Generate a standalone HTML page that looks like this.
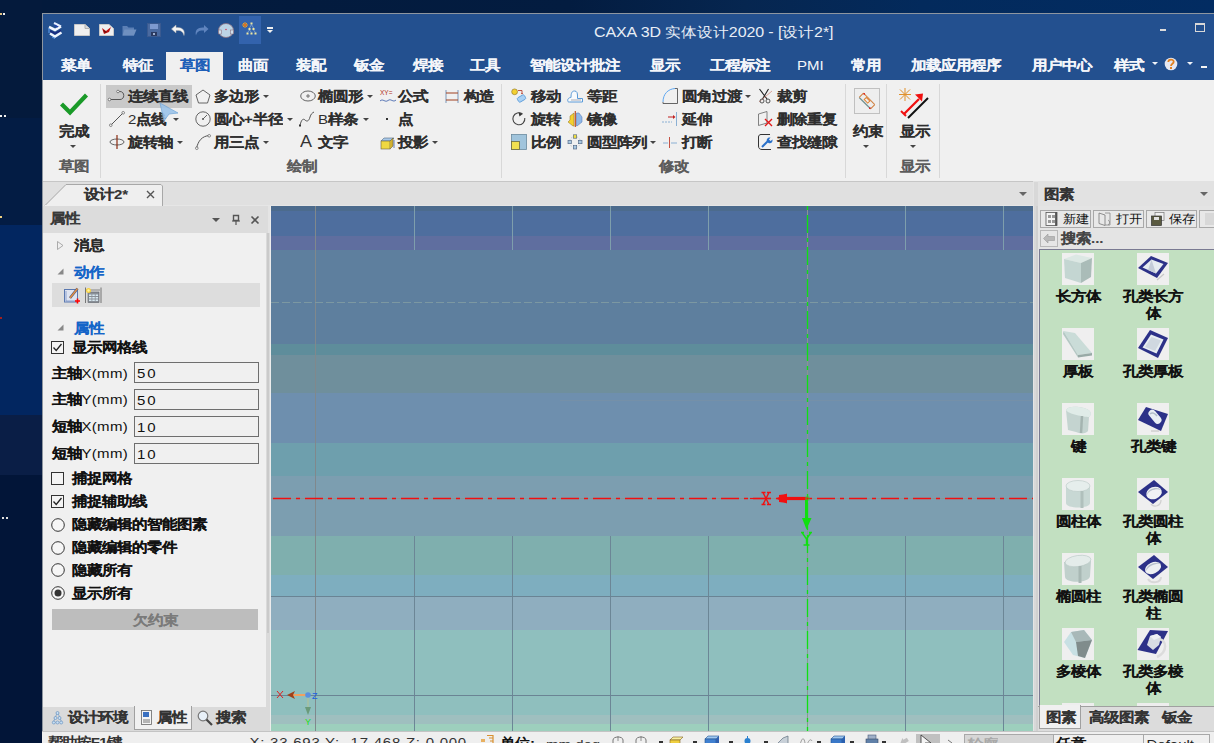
<!DOCTYPE html>
<html><head><meta charset="utf-8">
<style>
*{box-sizing:border-box}
html,body{margin:0;padding:0;width:1214px;height:743px;overflow:hidden;background:#021634;font-family:"Liberation Sans",sans-serif}
.a{position:absolute}
.t{position:absolute;white-space:nowrap;line-height:1;transform:scaleY(0.9);transform-origin:50% 55%}
.k{-webkit-text-stroke:0.12px currentColor}
svg{overflow:visible}
</style></head><body>

<div class="a" style="left:0px;top:0px;width:1214px;height:743px;background:#021636;"></div>
<div class="a" style="left:0px;top:0px;width:42px;height:118px;background:#041a3c;"></div>
<div class="a" style="left:42px;top:0px;width:1172px;height:13px;background:linear-gradient(90deg,#031a3c 0%,#031c40 45%,#062650 60%,#032a5c 75%,#022c62 100%);"></div>
<div class="a" style="left:0px;top:118px;width:42px;height:107px;background:#031c44;"></div>
<div class="a" style="left:0px;top:225px;width:42px;height:190px;background:#022660;"></div>
<div class="a" style="left:0px;top:415px;width:42px;height:60px;background:#0a1e46;"></div>
<div class="a" style="left:0px;top:475px;width:42px;height:268px;background:#021538;"></div>
<div class="a" style="left:0px;top:13px;width:2px;height:2px;background:#e0c080;"></div>
<div class="a" style="left:3px;top:13px;width:2px;height:2px;background:#f0f0f0;"></div>
<div class="a" style="left:0px;top:115px;width:2px;height:2px;background:#f0f0f0;"></div>
<div class="a" style="left:4px;top:115px;width:2px;height:2px;background:#f0f0f0;"></div>
<div class="a" style="left:0px;top:216px;width:2px;height:2px;background:#f0d080;"></div>
<div class="a" style="left:0px;top:317px;width:2px;height:2px;background:#a02020;"></div>
<div class="a" style="left:2px;top:517px;width:2px;height:2px;background:#e0e0e0;"></div>
<div class="a" style="left:6px;top:517px;width:2px;height:2px;background:#e0e0e0;"></div>
<div class="a" style="left:42px;top:13px;width:1172px;height:730px;background:#8e96a0;"></div>
<div class="a" style="left:43px;top:14px;width:1171px;height:66px;background:#23508f;"></div>
<svg class="a" style="left:45px;top:19px;" width="20" height="22" viewBox="0 0 20 22"><path d="M4 8 L10 11 L16 7.5" fill="none" stroke="#f4f8ff" stroke-width="2.6"/><path d="M9 4 L16 7.5" fill="none" stroke="#e8f0ff" stroke-width="2"/><path d="M9.5 6 L13 8" stroke="#2040b0" stroke-width="1.2"/><path d="M5 12 L10 14.5 L16 11.5" fill="none" stroke="#1a2a80" stroke-width="1.4"/><path d="M5 14.5 L10 17.5 L16.5 13.5" fill="none" stroke="#f0f6ff" stroke-width="2.4"/><path d="M4 9 V14 M7 18 L10 19.5" stroke="#60a0f0" stroke-width="1"/></svg>
<svg class="a" style="left:74px;top:24px;" width="16" height="12" viewBox="0 0 16 12"><path d="M0.5 0.5 H11 L15.5 4.5 V11.5 H0.5Z" fill="#efefef" stroke="#c8c8c8"/><path d="M11 0.5 V4.5 H15.5" fill="#d8d8d8" stroke="#b0b0b0"/></svg>
<svg class="a" style="left:99px;top:24px;" width="15" height="12" viewBox="0 0 15 12"><path d="M0.5 0.5 H10 L14.5 4.5 V11.5 H0.5Z" fill="#efefef" stroke="#c8c8c8"/><path d="M3 4 L7 7 L12 3 L10 8 L5 10Z" fill="#c01010"/><path d="M4 6 L8 8 L6 9Z" fill="#601010"/></svg>
<svg class="a" style="left:122px;top:25px;" width="15" height="11" viewBox="0 0 15 11"><path d="M0.5 1 H5 L6.5 2.5 H12 V10.5 H0.5Z" fill="#5b7fb5"/><path d="M2.5 4.5 H14.5 L12 10.5 H0.5Z" fill="#6f90c0"/></svg>
<svg class="a" style="left:147px;top:23px;" width="14" height="14" viewBox="0 0 14 14"><rect x="0.5" y="0.5" width="13" height="13" fill="#4a6aa0" stroke="#3a5a90"/><rect x="3" y="1" width="8" height="5" fill="#7d9ad0"/><rect x="4" y="9" width="6" height="4" fill="#2a3a60"/><rect x="6" y="10" width="2" height="2" fill="#a0b0d0"/></svg>
<svg class="a" style="left:171px;top:24px;" width="15" height="13" viewBox="0 0 15 13"><path d="M5 1 L0.5 5 L5 9 V6.5 C9 6 12 7 13 11.5 C14.5 6 11 3 5 3.5Z" fill="#f4f4f4" stroke="#b0b0b0" stroke-width="0.5"/></svg>
<svg class="a" style="left:194px;top:24px;" width="15" height="13" viewBox="0 0 15 13"><path d="M10 1 L14.5 5 L10 9 V6.5 C6 6 3 7 2 11.5 C0.5 6 4 3 10 3.5Z" fill="#5f84be"/></svg>
<svg class="a" style="left:218px;top:22px;" width="16" height="16" viewBox="0 0 16 16"><ellipse cx="8" cy="8.5" rx="7.5" ry="7" fill="#bcd4e6" stroke="#8a7080" stroke-width="0.8"/><rect x="0.5" y="8" width="3" height="4" fill="#d0e0ec" stroke="#806070" stroke-width="0.5"/><rect x="12.5" y="8" width="3" height="4" fill="#d0e0ec" stroke="#806070" stroke-width="0.5"/><circle cx="8" cy="7.5" r="0.8" fill="#d04060"/></svg>
<div class="a" style="left:239px;top:16px;width:22px;height:28px;background:#3363ad;"></div>
<svg class="a" style="left:242px;top:22px;" width="16" height="14" viewBox="0 0 16 14"><g stroke="#f0a020" stroke-width="1"><path d="M1 1 L5 5 M5 1 L1 5 M3 0 V6 M0 3 H6"/></g><circle cx="3" cy="3" r="1.3" fill="#f07010"/><g fill="#f0e8a0"><rect x="8.5" y="0.5" width="2" height="2"/><rect x="6.5" y="6" width="2" height="2"/><rect x="10.5" y="6" width="2" height="2"/><rect x="4.5" y="10.5" width="2" height="2"/><rect x="8.5" y="10.5" width="2" height="2"/><rect x="12.5" y="10.5" width="2" height="2"/></g><path d="M9.5 2.5 L7.5 6 M9.5 2.5 L11.5 6 M7.5 8 L5.5 10.5 M7.5 8 L9.5 10.5 M11.5 8 L13.5 10.5" stroke="#a0c0e0" stroke-width="0.6"/></svg>
<div class="a" style="left:267px;top:27px;width:6px;height:1.5px;background:#f0f0f0;"></div>
<div class="a" style="left:267px;top:30px;width:0;height:0;border-left:3px solid transparent;border-right:3px solid transparent;border-top:3px solid #f0f0f0"></div>
<div class="t" style="left:594px;top:24.2px;font-size:16px;color:#e8eef6;font-weight:normal;letter-spacing:-0.1px">CAXA 3D 实体设计2020 - [设计2*]</div>
<div class="a" style="left:1160px;top:29px;width:6px;height:2px;background:#dcdcdc;"></div>
<div class="a" style="left:1195px;top:23px;width:10px;height:9px;border:1px solid #d8d8d8;border-top-width:2px"></div>
<div class="a" style="left:166px;top:52px;width:57px;height:28px;background:#f0f0f0;"></div>
<div class="t k" style="left:61.0px;top:56.7px;font-size:15px;color:#f4f6fa;font-weight:bold;">菜单</div>
<div class="t k" style="left:122.5px;top:56.7px;font-size:15px;color:#f4f6fa;font-weight:bold;">特征</div>
<div class="t k" style="left:180.0px;top:56.7px;font-size:15px;color:#1f5fb8;font-weight:bold;">草图</div>
<div class="t k" style="left:238.0px;top:56.7px;font-size:15px;color:#f4f6fa;font-weight:bold;">曲面</div>
<div class="t k" style="left:296.0px;top:56.7px;font-size:15px;color:#f4f6fa;font-weight:bold;">装配</div>
<div class="t k" style="left:353.5px;top:56.7px;font-size:15px;color:#f4f6fa;font-weight:bold;">钣金</div>
<div class="t k" style="left:412.5px;top:56.7px;font-size:15px;color:#f4f6fa;font-weight:bold;">焊接</div>
<div class="t k" style="left:469.5px;top:56.7px;font-size:15px;color:#f4f6fa;font-weight:bold;">工具</div>
<div class="t k" style="left:529.5px;top:56.7px;font-size:15px;color:#f4f6fa;font-weight:bold;">智能设计批注</div>
<div class="t k" style="left:649.5px;top:56.7px;font-size:15px;color:#f4f6fa;font-weight:bold;">显示</div>
<div class="t k" style="left:709.5px;top:56.7px;font-size:15px;color:#f4f6fa;font-weight:bold;">工程标注</div>
<div class="t k" style="left:850.5px;top:56.7px;font-size:15px;color:#f4f6fa;font-weight:bold;">常用</div>
<div class="t k" style="left:910.5px;top:56.7px;font-size:15px;color:#f4f6fa;font-weight:bold;">加载应用程序</div>
<div class="t k" style="left:1031.5px;top:56.7px;font-size:15px;color:#f4f6fa;font-weight:bold;">用户中心</div>
<div class="t k" style="left:1113.5px;top:56.7px;font-size:15px;color:#f4f6fa;font-weight:bold;">样式</div>
<div class="t" style="left:797px;top:56.7px;font-size:15px;color:#f4f6fa;font-weight:normal;">PMI</div>
<div class="a" style="left:1151.5px;top:62px;width:0;height:0;border-left:3px solid transparent;border-right:3px solid transparent;border-top:3px solid #f0f4fa"></div>
<svg class="a" style="left:1164px;top:57px;" width="14" height="14" viewBox="0 0 14 14"><circle cx="7" cy="7" r="6.3" fill="#e6e8f0"/><path d="M4.3 5 C4.3 1.8 9.7 1.8 9.7 4.8 C9.7 6.8 7 6.8 7 9" fill="none" stroke="#e08020" stroke-width="1.8"/><rect x="6" y="10" width="2" height="2" fill="#e08020"/></svg>
<div class="a" style="left:1186.5px;top:62px;width:0;height:0;border-left:3px solid transparent;border-right:3px solid transparent;border-top:3px solid #f0f4fa"></div>
<div class="a" style="left:1201px;top:66px;width:6px;height:2px;background:#f4f4f4;"></div>
<div class="a" style="left:43px;top:80px;width:1171px;height:101px;background:#f0f0f0;"></div>
<div class="a" style="left:43px;top:181px;width:1171px;height:1px;background:#c6c6c6;"></div>
<div class="a" style="left:100px;top:84px;width:1px;height:94px;background:#d8d8d8;"></div>
<div class="a" style="left:501px;top:84px;width:1px;height:94px;background:#d8d8d8;"></div>
<div class="a" style="left:845px;top:84px;width:1px;height:94px;background:#d8d8d8;"></div>
<div class="a" style="left:886px;top:84px;width:1px;height:94px;background:#d8d8d8;"></div>
<div class="a" style="left:939px;top:84px;width:1px;height:94px;background:#d8d8d8;"></div>
<svg class="a" style="left:60px;top:93px;" width="28" height="22" viewBox="0 0 28 22"><path d="M1.5 11 L10 19.5 L26.5 2" fill="none" stroke="#1a9a28" stroke-width="4.2"/></svg>
<div class="t k" style="left:59px;top:122.7px;font-size:15px;color:#2e2e2e;font-weight:bold;">完成</div>
<div class="a" style="left:70px;top:145px;width:0;height:0;border-left:3px solid transparent;border-right:3px solid transparent;border-top:3px solid #444"></div>
<div class="t k" style="left:59px;top:158.2px;font-size:15px;color:#5c5c5c;font-weight:bold;">草图</div>
<div class="a" style="left:106px;top:85px;width:86px;height:23px;background:#c9c9c9;"></div>
<svg class="a" style="left:108px;top:89px;" width="18" height="14" viewBox="0 0 18 14"><path d="M1 10.5 H12 C17 10.5 17 2.5 12 2.5 H10" fill="none" stroke="#555" stroke-width="1"/><circle cx="10" cy="2.5" r="1.3" fill="#fff" stroke="#555" stroke-width="0.7"/><circle cx="1.5" cy="10.5" r="1.3" fill="#fff" stroke="#555" stroke-width="0.7"/></svg>
<div class="t k" style="left:128px;top:87.7px;font-size:15px;color:#2e2e2e;font-weight:bold;">连续直线</div>
<svg class="a" style="left:109px;top:111px;" width="16" height="16" viewBox="0 0 16 16"><path d="M1.5 14.5 L14.5 1.5" stroke="#555" stroke-width="1"/><circle cx="1.8" cy="14.2" r="1.3" fill="#fff" stroke="#555" stroke-width="0.7"/><circle cx="14.2" cy="1.8" r="1.3" fill="#fff" stroke="#555" stroke-width="0.7"/></svg>
<div class="t k" style="left:128px;top:110.7px;font-size:15px;color:#2e2e2e;font-weight:bold;"><span style="font-weight:normal;-webkit-text-stroke:0">2</span>点线</div>
<div class="a" style="left:173px;top:118px;width:0;height:0;border-left:3px solid transparent;border-right:3px solid transparent;border-top:3px solid #444"></div>
<svg class="a" style="left:109px;top:135px;" width="16" height="14" viewBox="0 0 16 14"><ellipse cx="8" cy="7" rx="7" ry="3" fill="none" stroke="#555" stroke-width="0.9"/><path d="M8 0 V14" stroke="#8a2a10" stroke-width="1.2"/></svg>
<div class="t k" style="left:128px;top:133.7px;font-size:15px;color:#2e2e2e;font-weight:bold;">旋转轴</div>
<div class="a" style="left:177px;top:141px;width:0;height:0;border-left:3px solid transparent;border-right:3px solid transparent;border-top:3px solid #444"></div>
<svg class="a" style="left:158px;top:101px;" width="22" height="22" viewBox="0 0 22 22"><path d="M2 2 L20 12 L11 13 L6 20Z" fill="#9cc4ea" stroke="#6fa4d8" stroke-width="0.8" opacity="0.9"/></svg>
<svg class="a" style="left:195px;top:89px;" width="16" height="15" viewBox="0 0 16 15"><path d="M8 1 L15 6 L12.5 14 H3.5 L1 6Z" fill="none" stroke="#555" stroke-width="0.9"/></svg>
<div class="t k" style="left:214px;top:87.7px;font-size:15px;color:#2e2e2e;font-weight:bold;">多边形</div>
<div class="a" style="left:263px;top:95px;width:0;height:0;border-left:3px solid transparent;border-right:3px solid transparent;border-top:3px solid #444"></div>
<svg class="a" style="left:195px;top:111px;" width="16" height="16" viewBox="0 0 16 16"><circle cx="8" cy="8" r="7.2" fill="none" stroke="#555" stroke-width="0.9"/><path d="M8 8 L12 4" stroke="#555" stroke-width="0.9"/><circle cx="8" cy="8" r="1" fill="#555"/></svg>
<div class="t k" style="left:214px;top:110.7px;font-size:15px;color:#2e2e2e;font-weight:bold;">圆心+半径</div>
<div class="a" style="left:287px;top:118px;width:0;height:0;border-left:3px solid transparent;border-right:3px solid transparent;border-top:3px solid #444"></div>
<svg class="a" style="left:195px;top:134px;" width="16" height="16" viewBox="0 0 16 16"><path d="M1.5 14.5 C3 7 7 2 14.5 1.5" fill="none" stroke="#555" stroke-width="1"/><circle cx="1.8" cy="14.2" r="1.3" fill="#fff" stroke="#555" stroke-width="0.7"/><circle cx="14.2" cy="1.8" r="1.3" fill="#fff" stroke="#555" stroke-width="0.7"/></svg>
<div class="t k" style="left:214px;top:133.7px;font-size:15px;color:#2e2e2e;font-weight:bold;">用三点</div>
<div class="a" style="left:263px;top:141px;width:0;height:0;border-left:3px solid transparent;border-right:3px solid transparent;border-top:3px solid #444"></div>
<svg class="a" style="left:300px;top:90px;" width="16" height="12" viewBox="0 0 16 12"><ellipse cx="8" cy="6" rx="7.3" ry="5" fill="none" stroke="#555" stroke-width="0.9"/><path d="M6 6 H10 M8 4 V8" stroke="#555" stroke-width="0.8"/></svg>
<div class="t k" style="left:318px;top:87.7px;font-size:15px;color:#2e2e2e;font-weight:bold;">椭圆形</div>
<div class="a" style="left:367px;top:95px;width:0;height:0;border-left:3px solid transparent;border-right:3px solid transparent;border-top:3px solid #444"></div>
<svg class="a" style="left:299px;top:111px;" width="16" height="16" viewBox="0 0 16 16"><path d="M1 15 C2 9 4 7 6 9 C8 11 10 10 11 6 C12 3 13 2 15 1" fill="none" stroke="#555" stroke-width="1"/><rect x="0" y="13.5" width="2" height="2" fill="#333"/></svg>
<div class="t k" style="left:318px;top:110.7px;font-size:15px;color:#2e2e2e;font-weight:bold;"><span style="font-weight:normal;-webkit-text-stroke:0">B</span>样条</div>
<div class="a" style="left:363px;top:118px;width:0;height:0;border-left:3px solid transparent;border-right:3px solid transparent;border-top:3px solid #444"></div>
<div class="t" style="left:300px;top:132.7px;font-size:18px;color:#333;font-weight:normal;">A</div>
<div class="t k" style="left:318px;top:133.7px;font-size:15px;color:#2e2e2e;font-weight:bold;">文字</div>
<svg class="a" style="left:380px;top:89px;" width="16" height="15" viewBox="0 0 16 15"><text x="0" y="6" font-size="6.5" fill="#b03020" font-family="Liberation Sans">XY=</text><path d="M0 12 C3 9 5 14 8 11.5 C11 9 13 14 16 11" fill="none" stroke="#4a6ab0" stroke-width="0.9"/></svg>
<div class="t k" style="left:398px;top:87.7px;font-size:15px;color:#2e2e2e;font-weight:bold;">公式</div>
<div class="a" style="left:386px;top:118px;width:2px;height:2px;background:#333;"></div>
<div class="t k" style="left:398px;top:110.7px;font-size:15px;color:#2e2e2e;font-weight:bold;">点</div>
<svg class="a" style="left:380px;top:134px;" width="15" height="16" viewBox="0 0 15 16"><path d="M1 7 L4 4 H14 L11 7Z" fill="#a8c8e8" stroke="#506a80" stroke-width="0.6"/><rect x="1" y="7" width="9" height="8" fill="#f0d840" stroke="#6a6040" stroke-width="0.6"/><path d="M10 7 L13 4 V12 L10 15" fill="#d0b030" stroke="#6a6040" stroke-width="0.6"/><path d="M14 6 V14" stroke="#4060a0" stroke-width="0.8"/></svg>
<div class="t k" style="left:398px;top:133.7px;font-size:15px;color:#2e2e2e;font-weight:bold;">投影</div>
<div class="a" style="left:432px;top:141px;width:0;height:0;border-left:3px solid transparent;border-right:3px solid transparent;border-top:3px solid #444"></div>
<svg class="a" style="left:445px;top:89px;" width="14" height="15" viewBox="0 0 14 15"><path d="M1 1 V14 M13 1 V14" stroke="#7a96b8" stroke-width="1"/><path d="M1 4 H13 M1 11 H13" stroke="#a04020" stroke-width="1"/></svg>
<div class="t k" style="left:463.5px;top:87.7px;font-size:15px;color:#2e2e2e;font-weight:bold;">构造</div>
<div class="t k" style="left:287px;top:158.2px;font-size:15px;color:#5c5c5c;font-weight:bold;">绘制</div>
<svg class="a" style="left:511px;top:88px;" width="16" height="16" viewBox="0 0 16 16"><circle cx="3.6" cy="3.8" r="2.9" fill="#f4d030" stroke="#8a7020" stroke-width="0.6"/><path d="M7 2.5 H11 V5.5" fill="none" stroke="#b03020" stroke-width="0.8"/><path d="M10 5 L11 6.5 L12 5Z" fill="#b03020"/><rect x="6.5" y="8" width="8" height="5" rx="1.5" transform="rotate(-30 10.5 10.5)" fill="#a8d0f4" stroke="#5a9ad8" stroke-width="0.8"/></svg>
<div class="t k" style="left:530.5px;top:87.7px;font-size:15px;color:#2e2e2e;font-weight:bold;">移动</div>
<svg class="a" style="left:512px;top:111px;" width="14" height="15" viewBox="0 0 14 15"><path d="M10.5 3 A6 6 0 1 0 12.8 7" fill="none" stroke="#444" stroke-width="1.1"/><path d="M6.5 1.2 L10.5 3 L7.5 5.5Z" fill="#333"/></svg>
<div class="t k" style="left:530.5px;top:110.7px;font-size:15px;color:#2e2e2e;font-weight:bold;">旋转</div>
<svg class="a" style="left:511px;top:134px;" width="16" height="16" viewBox="0 0 16 16"><rect x="0.5" y="0.5" width="15" height="15" fill="#a0c4dc" stroke="#6a8aa0" stroke-width="0.8"/><rect x="0.5" y="7.5" width="8" height="8" fill="#f0e050" stroke="#6a6a40" stroke-width="0.8"/></svg>
<div class="t k" style="left:530.5px;top:133.7px;font-size:15px;color:#2e2e2e;font-weight:bold;">比例</div>
<svg class="a" style="left:567px;top:88px;" width="16" height="16" viewBox="0 0 16 16"><path d="M1 13.5 C0 11 2 9.5 4 9.5 C4 5 5 3 7.5 3 C10 3 10.5 5 10.5 8 V10.5 H15.5 V14 H2.5 C1.5 14 1 14 1 13.5Z" fill="#f8fafc" stroke="#5a9ad8" stroke-width="1"/><path d="M4 12 H14" stroke="#8a8a9a" stroke-width="0.7"/></svg>
<div class="t k" style="left:587px;top:87.7px;font-size:15px;color:#2e2e2e;font-weight:bold;">等距</div>
<svg class="a" style="left:567px;top:111px;" width="16" height="16" viewBox="0 0 16 16"><path d="M7 2 L3 5 V9 L1 11 L6 15 H7Z" fill="#f4d030" stroke="#8a7020" stroke-width="0.5"/><path d="M9.5 2 H12 L15 6 V11 L10 15 H9.5Z" fill="#90b8e8" stroke="#4a70b0" stroke-width="0.5"/><path d="M8.3 0 V16" stroke="#c05020" stroke-width="1.2"/></svg>
<div class="t k" style="left:587px;top:110.7px;font-size:15px;color:#2e2e2e;font-weight:bold;">镜像</div>
<svg class="a" style="left:567px;top:134px;" width="16" height="16" viewBox="0 0 16 16"><circle cx="8" cy="8" r="5.5" fill="none" stroke="#a0a8b8" stroke-width="0.6" stroke-dasharray="1.5 1.5"/><g stroke="#4a6080" stroke-width="0.6"><rect x="6.3" y="0.8" width="3.4" height="3.4" fill="#f4e040"/><rect x="1" y="6.3" width="3.4" height="3.4" fill="#a8c8e0"/><rect x="11.6" y="6.3" width="3.4" height="3.4" fill="#a8c8e0"/><rect x="6.3" y="11.6" width="3.4" height="3.4" fill="#a8c8e0"/></g></svg>
<div class="t k" style="left:587px;top:133.7px;font-size:15px;color:#2e2e2e;font-weight:bold;">圆型阵列</div>
<div class="a" style="left:650px;top:141px;width:0;height:0;border-left:3px solid transparent;border-right:3px solid transparent;border-top:3px solid #444"></div>
<svg class="a" style="left:662px;top:88px;" width="16" height="16" viewBox="0 0 16 16"><path d="M13 0.5 H15.5 V15.5 H1 V14" fill="none" stroke="#555" stroke-width="0.9"/><path d="M1 14 C1 6 6 1 13 0.5" fill="none" stroke="#60a8f0" stroke-width="1"/></svg>
<div class="t k" style="left:682px;top:87.7px;font-size:15px;color:#2e2e2e;font-weight:bold;">圆角过渡</div>
<div class="a" style="left:745px;top:95px;width:0;height:0;border-left:3px solid transparent;border-right:3px solid transparent;border-top:3px solid #444"></div>
<svg class="a" style="left:662px;top:111px;" width="16" height="15" viewBox="0 0 16 15"><path d="M0 11 H10" stroke="#80a8d0" stroke-width="0.9" stroke-dasharray="2 1"/><path d="M6 6 H12" stroke="#c02020" stroke-width="1"/><path d="M11 4 L13.5 6 L11 8" fill="#c02020"/><path d="M14.5 1 V15" stroke="#80a8d0" stroke-width="0.9"/></svg>
<div class="t k" style="left:682px;top:110.7px;font-size:15px;color:#2e2e2e;font-weight:bold;">延伸</div>
<svg class="a" style="left:662px;top:134px;" width="16" height="15" viewBox="0 0 16 15"><path d="M1 9 H6 M9 9 H15" stroke="#80a8d0" stroke-width="0.9"/><path d="M7.5 3 V14" stroke="#c04030" stroke-width="0.9"/></svg>
<div class="t k" style="left:682px;top:133.7px;font-size:15px;color:#2e2e2e;font-weight:bold;">打断</div>
<svg class="a" style="left:758px;top:88px;" width="15" height="16" viewBox="0 0 15 16"><path d="M1.5 1 L9 11 M10.5 1 L4.5 11" stroke="#222" stroke-width="1.1"/><path d="M14 3 L1 14" stroke="#d08070" stroke-width="0.7"/><circle cx="4" cy="13" r="2" fill="none" stroke="#444" stroke-width="0.9"/><circle cx="10" cy="13" r="2" fill="none" stroke="#444" stroke-width="0.9"/></svg>
<div class="t k" style="left:777px;top:87.7px;font-size:15px;color:#2e2e2e;font-weight:bold;">裁剪</div>
<svg class="a" style="left:758px;top:111px;" width="15" height="16" viewBox="0 0 15 16"><path d="M0.5 3 L9 0.5 V12 L0.5 14.5Z" fill="none" stroke="#666" stroke-width="0.8"/><path d="M7 8 L14 15 M14 8 L7 15" stroke="#e01818" stroke-width="1.4"/></svg>
<div class="t k" style="left:777px;top:110.7px;font-size:15px;color:#2e2e2e;font-weight:bold;">删除重复</div>
<svg class="a" style="left:758px;top:134px;" width="15" height="16" viewBox="0 0 15 16"><path d="M12 0.5 H3 C1.5 0.5 0.5 1.5 0.5 3 V12 C0.5 14.5 2 15.5 4 15.5 H13" fill="none" stroke="#333" stroke-width="1"/><path d="M4 13 L10 7" stroke="#2a70c8" stroke-width="2"/><path d="M9 7.5 C8 5 10 3 12.5 3.5 L11 5.5 L12.5 7 L14.5 5.5 C15 8 13 10 10.5 9Z" fill="#2a70c8"/></svg>
<div class="t k" style="left:777px;top:133.7px;font-size:15px;color:#2e2e2e;font-weight:bold;">查找缝隙</div>
<div class="t k" style="left:659px;top:158.2px;font-size:15px;color:#5c5c5c;font-weight:bold;">修改</div>
<div class="a" style="left:854px;top:88px;width:26px;height:26px;background:#c0c0c0;"></div>
<div class="a" style="left:855px;top:89px;width:24px;height:24px;background:#eeeeee;"></div>
<svg class="a" style="left:858px;top:92px;" width="18" height="18" viewBox="0 0 18 18"><g transform="rotate(45 9 9)"><path d="M1 6 H17" stroke="#d08040" stroke-width="1"/><path d="M1 12 H17" stroke="#709090" stroke-width="1.2"/><path d="M1 6 V12 M17 6 V12" stroke="#d08040" stroke-width="1"/><rect x="6" y="7" width="5" height="3" fill="none" stroke="#e08030" stroke-width="1"/><circle cx="2" cy="6" r="0.8" fill="#e01010"/><circle cx="16" cy="12" r="0.8" fill="#e01010"/></g></svg>
<div class="t k" style="left:853px;top:122.7px;font-size:15px;color:#2e2e2e;font-weight:bold;">约束</div>
<div class="a" style="left:863px;top:145px;width:0;height:0;border-left:3px solid transparent;border-right:3px solid transparent;border-top:3px solid #444"></div>
<svg class="a" style="left:899px;top:88px;" width="30" height="31" viewBox="0 0 30 31"><g stroke="#e0902a" stroke-width="1"><path d="M1 1.5 L11 11.5 M11 1.5 L1 11.5 M6 0 V13 M0 6.5 H12"/></g><path d="M5 26 L20 11" stroke="#f01010" stroke-width="2.3"/><path d="M16 6.5 L24 5.5 L23 13.5Z" fill="#f01010"/><path d="M2 23 L7 28" stroke="#f01010" stroke-width="2"/><path d="M9 30 L29 10" stroke="#111" stroke-width="2"/></svg>
<div class="t k" style="left:899.5px;top:122.7px;font-size:15px;color:#2e2e2e;font-weight:bold;">显示</div>
<div class="a" style="left:910px;top:145px;width:0;height:0;border-left:3px solid transparent;border-right:3px solid transparent;border-top:3px solid #444"></div>
<div class="t k" style="left:899.5px;top:158.2px;font-size:15px;color:#5c5c5c;font-weight:bold;">显示</div>
<div class="a" style="left:43px;top:182px;width:990px;height:24px;background:#e0e0e0;"></div>
<div class="a" style="left:43px;top:205px;width:990px;height:1px;background:#e6e6e6;"></div>
<svg class="a" style="left:44px;top:183px;" width="120" height="23" viewBox="0 0 120 23"><path d="M1 22.5 L22 1.5 H117 L118.5 3 V23 " fill="#efefef" stroke="#a8a8a8" stroke-width="1"/></svg>
<div class="a" style="left:45px;top:205px;width:117px;height:1px;background:#efefef;"></div>
<div class="t k" style="left:84px;top:185.7px;font-size:15px;color:#333;font-weight:bold;">设计2*</div>
<svg class="a" style="left:146px;top:190px;" width="9" height="9" viewBox="0 0 9 9"><path d="M1 1 L8 8 M8 1 L1 8" stroke="#555" stroke-width="1.4"/></svg>
<div class="a" style="left:1019px;top:192px;width:0;height:0;border-left:4px solid transparent;border-right:4px solid transparent;border-top:4px solid #666"></div>
<div class="a" style="left:43px;top:206px;width:228px;height:525px;background:#f0f0f0;"></div>
<div class="a" style="left:43px;top:206px;width:225px;height:27px;background:#dcdcdc;"></div>
<div class="t k" style="left:50px;top:210.2px;font-size:15px;color:#3a3a3a;font-weight:bold;">属性</div>
<div class="a" style="left:212.0px;top:218px;width:0;height:0;border-left:4.5px solid transparent;border-right:4.5px solid transparent;border-top:4.5px solid #555"></div>
<svg class="a" style="left:232px;top:215px;" width="8" height="10" viewBox="0 0 8 10"><path d="M1.5 0.5 H6.5 V5.5 H1.5Z" fill="none" stroke="#555" stroke-width="1.4"/><path d="M0 6 H8 M4 6 V10" stroke="#555" stroke-width="1.2"/></svg>
<svg class="a" style="left:250.5px;top:215.5px;" width="8" height="8" viewBox="0 0 8 8"><path d="M0.5 0.5 L7.5 7.5 M7.5 0.5 L0.5 7.5" stroke="#555" stroke-width="1.6"/></svg>
<div class="a" style="left:268px;top:206px;width:3px;height:27px;background:#e4e4e4;"></div>
<div class="a" style="left:266px;top:233px;width:5px;height:498px;background:#dadada;"></div>
<div class="a" style="left:267px;top:233px;width:2px;height:400px;background:#cacaca;"></div>
<div class="a" style="left:270px;top:206px;width:1px;height:525px;background:#ececec;"></div>
<svg class="a" style="left:57px;top:241px;" width="7" height="9" viewBox="0 0 7 9"><path d="M0.5 0.5 L6 4.5 L0.5 8.5Z" fill="none" stroke="#999" stroke-width="0.8"/></svg>
<div class="t k" style="left:74px;top:237.2px;font-size:15px;color:#2a2a2a;font-weight:bold;">消息</div>
<svg class="a" style="left:57px;top:268px;" width="7" height="7" viewBox="0 0 7 7"><path d="M6.5 0.5 V6.5 H0.5Z" fill="#888"/></svg>
<div class="t k" style="left:74px;top:263.7px;font-size:15px;color:#1565c8;font-weight:bold;">动作</div>
<div class="a" style="left:52px;top:283px;width:208px;height:24px;background:#dddddd;"></div>
<svg class="a" style="left:64px;top:287px;" width="16" height="16" viewBox="0 0 16 16"><rect x="0.5" y="2.5" width="13" height="12.5" fill="#dfe4f0" stroke="#5a78b0" stroke-width="1"/><path d="M2 14 V4 M2 14 H12" stroke="#6a88c0" stroke-width="0.7"/><path d="M6 11 L13.5 1.5" stroke="#4a5a80" stroke-width="2.6"/><path d="M6 11 L13.5 1.5" stroke="#e89040" stroke-width="1.3"/><path d="M11 14 H16 M13.5 11.5 V16.5" stroke="#f00" stroke-width="1.6"/></svg>
<svg class="a" style="left:85px;top:287px;" width="17" height="16" viewBox="0 0 17 16"><path d="M0.5 0.5 V16 M16 0.5 V16" stroke="#6a6a6a" stroke-width="0.9"/><path d="M1 3 H15" stroke="#7a7a7a" stroke-width="0.9"/><rect x="3" y="5" width="11" height="10.5" fill="#8a9098" stroke="#5a6068" stroke-width="0.6"/><g fill="#d8e8f0"><rect x="4" y="7.5" width="2.5" height="1.5"/><rect x="7.3" y="7.5" width="2.5" height="1.5"/><rect x="10.6" y="7.5" width="2.5" height="1.5"/><rect x="4" y="10" width="2.5" height="1.5"/><rect x="7.3" y="10" width="2.5" height="1.5"/><rect x="10.6" y="10" width="2.5" height="1.5"/><rect x="4" y="12.5" width="2.5" height="1.5"/><rect x="7.3" y="12.5" width="2.5" height="1.5"/><rect x="10.6" y="12.5" width="2.5" height="1.5"/></g><circle cx="3.5" cy="3.5" r="2.5" fill="#f8d040"/><circle cx="3.5" cy="3.5" r="1.2" fill="#fff4a0"/></svg>
<svg class="a" style="left:57px;top:324px;" width="7" height="7" viewBox="0 0 7 7"><path d="M6.5 0.5 V6.5 H0.5Z" fill="#888"/></svg>
<div class="t k" style="left:74px;top:319.7px;font-size:15px;color:#1565c8;font-weight:bold;">属性</div>
<div class="a" style="left:51px;top:341px;width:13px;height:13px;border:1px solid #333;background:#f4f4f4"></div>
<svg class="a" style="left:51px;top:341px;" width="13" height="13" viewBox="0 0 13 13"><path d="M2.5 6.5 L5.2 9.5 L10.5 3" fill="none" stroke="#222" stroke-width="1.3"/></svg>
<div class="t k" style="left:71.5px;top:339.2px;font-size:15px;color:#111;font-weight:bold;">显示网格线</div>
<div class="t" style="left:51.5px;top:364.7px;font-size:15px;color:#111"><b class="k">主轴</b><span style="letter-spacing:0.3px">X(mm)</span></div>
<div class="a" style="left:134px;top:362px;width:125px;height:21px;border:1px solid #6e6e6e;background:#f0f0f0"></div>
<div class="t" style="left:137px;top:365.2px;font-size:15px;color:#111;font-weight:normal;letter-spacing:2px">50</div>
<div class="t" style="left:51.5px;top:391.2px;font-size:15px;color:#111"><b class="k">主轴</b><span style="letter-spacing:0.3px">Y(mm)</span></div>
<div class="a" style="left:134px;top:388.5px;width:125px;height:21px;border:1px solid #6e6e6e;background:#f0f0f0"></div>
<div class="t" style="left:137px;top:391.7px;font-size:15px;color:#111;font-weight:normal;letter-spacing:2px">50</div>
<div class="t" style="left:51.5px;top:418.2px;font-size:15px;color:#111"><b class="k">短轴</b><span style="letter-spacing:0.3px">X(mm)</span></div>
<div class="a" style="left:134px;top:415.5px;width:125px;height:21px;border:1px solid #6e6e6e;background:#f0f0f0"></div>
<div class="t" style="left:137px;top:418.7px;font-size:15px;color:#111;font-weight:normal;letter-spacing:2px">10</div>
<div class="t" style="left:51.5px;top:445.2px;font-size:15px;color:#111"><b class="k">短轴</b><span style="letter-spacing:0.3px">Y(mm)</span></div>
<div class="a" style="left:134px;top:442.5px;width:125px;height:21px;border:1px solid #6e6e6e;background:#f0f0f0"></div>
<div class="t" style="left:137px;top:445.7px;font-size:15px;color:#111;font-weight:normal;letter-spacing:2px">10</div>
<div class="a" style="left:51px;top:472px;width:13px;height:13px;border:1px solid #333;background:#f4f4f4"></div>
<div class="t k" style="left:71.5px;top:470.2px;font-size:15px;color:#111;font-weight:bold;">捕捉网格</div>
<div class="a" style="left:51px;top:495px;width:13px;height:13px;border:1px solid #333;background:#f4f4f4"></div>
<svg class="a" style="left:51px;top:495px;" width="13" height="13" viewBox="0 0 13 13"><path d="M2.5 6.5 L5.2 9.5 L10.5 3" fill="none" stroke="#222" stroke-width="1.3"/></svg>
<div class="t k" style="left:71.5px;top:493.2px;font-size:15px;color:#111;font-weight:bold;">捕捉辅助线</div>
<svg class="a" style="left:50.5px;top:517.5px;" width="14" height="14" viewBox="0 0 14 14"><circle cx="7" cy="7" r="6.3" fill="#f6f6f6" stroke="#333" stroke-width="1"/></svg>
<div class="t k" style="left:71.5px;top:516.2px;font-size:15px;color:#111;font-weight:bold;">隐藏编辑的智能图素</div>
<svg class="a" style="left:50.5px;top:540.5px;" width="14" height="14" viewBox="0 0 14 14"><circle cx="7" cy="7" r="6.3" fill="#f6f6f6" stroke="#333" stroke-width="1"/></svg>
<div class="t k" style="left:71.5px;top:539.2px;font-size:15px;color:#111;font-weight:bold;">隐藏编辑的零件</div>
<svg class="a" style="left:50.5px;top:563px;" width="14" height="14" viewBox="0 0 14 14"><circle cx="7" cy="7" r="6.3" fill="#f6f6f6" stroke="#333" stroke-width="1"/></svg>
<div class="t k" style="left:71.5px;top:561.7px;font-size:15px;color:#111;font-weight:bold;">隐藏所有</div>
<svg class="a" style="left:50.5px;top:586px;" width="14" height="14" viewBox="0 0 14 14"><circle cx="7" cy="7" r="6.3" fill="#f6f6f6" stroke="#333" stroke-width="1"/><circle cx="7" cy="7" r="3.5" fill="#333"/></svg>
<div class="t k" style="left:71.5px;top:584.7px;font-size:15px;color:#111;font-weight:bold;">显示所有</div>
<div class="a" style="left:52px;top:609px;width:206px;height:21px;background:#bdbdbd;"></div>
<div class="t k" style="left:133px;top:611.7px;font-size:15px;color:#7a7a7a;font-weight:bold;">欠约束</div>
<div class="a" style="left:43px;top:707px;width:224px;height:24px;background:#dadada;"></div>
<div class="a" style="left:134px;top:706px;width:58px;height:24px;border:1px solid #a0a0a0;border-top:none;background:#f0f0f0"></div>
<svg class="a" style="left:52px;top:711px;" width="11" height="13" viewBox="0 0 11 13"><path d="M5.5 1 L1 12 M5.5 1 L10 12" stroke="#7aa0c8" stroke-width="0.8" fill="none"/><g fill="#c8e0f4" stroke="#5a86b8" stroke-width="0.6"><circle cx="5.5" cy="2" r="1.5"/><circle cx="3.5" cy="7" r="1.5"/><circle cx="7.5" cy="7" r="1.5"/><circle cx="1.8" cy="11.5" r="1.5"/><circle cx="5.5" cy="11.5" r="1.5"/><circle cx="9.2" cy="11.5" r="1.5"/></g></svg>
<div class="t k" style="left:67.5px;top:709.2px;font-size:15px;color:#333;font-weight:bold;">设计环境</div>
<svg class="a" style="left:141px;top:710px;" width="11" height="15" viewBox="0 0 11 15"><rect x="0.5" y="0.5" width="10" height="14" fill="#f4f4f4" stroke="#666" stroke-width="0.8"/><rect x="2" y="2" width="6" height="5" fill="#3a70c0"/><path d="M2 10 H9 M2 12 H9" stroke="#555" stroke-width="0.8"/></svg>
<div class="t k" style="left:156.5px;top:709.2px;font-size:15px;color:#333;font-weight:bold;">属性</div>
<svg class="a" style="left:197px;top:710px;" width="16" height="16" viewBox="0 0 16 16"><circle cx="6" cy="6" r="4.8" fill="#e8f0f8" stroke="#777" stroke-width="1.2"/><path d="M9.5 9.5 L15 15" stroke="#444" stroke-width="2.2"/></svg>
<div class="t k" style="left:215.5px;top:709.2px;font-size:15px;color:#333;font-weight:bold;">搜索</div>
<div class="a" style="left:271px;top:206px;width:763px;height:5px;background:#4c6b8d;"></div>
<div class="a" style="left:271px;top:211px;width:763px;height:25px;background:#4e6e9e;"></div>
<div class="a" style="left:271px;top:236px;width:763px;height:14px;background:#5f6e9f;"></div>
<div class="a" style="left:271px;top:250px;width:763px;height:94px;background:#5e7f9e;"></div>
<div class="a" style="left:271px;top:344px;width:763px;height:11px;background:#5e8d9b;"></div>
<div class="a" style="left:271px;top:355px;width:763px;height:38px;background:#6f8f9c;"></div>
<div class="a" style="left:271px;top:393px;width:763px;height:50px;background:#6e8fae;"></div>
<div class="a" style="left:271px;top:443px;width:763px;height:33px;background:#6e9fad;"></div>
<div class="a" style="left:271px;top:476px;width:763px;height:60px;background:#7c9eb0;"></div>
<div class="a" style="left:271px;top:536px;width:763px;height:39px;background:#7fafae;"></div>
<div class="a" style="left:271px;top:575px;width:763px;height:21px;background:#7eaebf;"></div>
<div class="a" style="left:271px;top:596px;width:763px;height:34px;background:#8faebf;"></div>
<div class="a" style="left:271px;top:630px;width:763px;height:85px;background:#8fbfbe;"></div>
<div class="a" style="left:271px;top:715px;width:763px;height:9px;background:#9fbfbf;"></div>
<div class="a" style="left:271px;top:724px;width:763px;height:7px;background:#9dcfbd;"></div>
<div class="a" style="left:315px;top:206px;width:1px;height:525px;background:#80888c;"></div>
<div class="a" style="left:414px;top:206px;width:1px;height:44px;background:#7e9eac;"></div>
<div class="a" style="left:414px;top:536px;width:1px;height:195px;background:#6c8696;"></div>
<div class="a" style="left:512px;top:206px;width:1px;height:44px;background:#7e9eac;"></div>
<div class="a" style="left:512px;top:536px;width:1px;height:195px;background:#6c8696;"></div>
<div class="a" style="left:610px;top:206px;width:1px;height:44px;background:#7e9eac;"></div>
<div class="a" style="left:610px;top:536px;width:1px;height:195px;background:#6c8696;"></div>
<div class="a" style="left:708px;top:206px;width:1px;height:44px;background:#7e9eac;"></div>
<div class="a" style="left:708px;top:536px;width:1px;height:195px;background:#6c8696;"></div>
<div class="a" style="left:905px;top:206px;width:1px;height:44px;background:#7e9eac;"></div>
<div class="a" style="left:905px;top:536px;width:1px;height:195px;background:#6c8696;"></div>
<div class="a" style="left:1003px;top:206px;width:1px;height:44px;background:#7e9eac;"></div>
<div class="a" style="left:1003px;top:536px;width:1px;height:195px;background:#6c8696;"></div>
<svg class="a" style="left:271px;top:302px;" width="763" height="1" viewBox="0 0 763 1"><path d="M0 0.5 H763" stroke="#7c98a2" stroke-width="1" stroke-dasharray="8 3"/></svg>
<div class="a" style="left:560px;top:400px;width:473px;height:1px;background:#7590a8;"></div>
<div class="a" style="left:271px;top:596px;width:763px;height:1px;background:#6a8494;"></div>
<div class="a" style="left:271px;top:695px;width:763px;height:1px;background:#6a8494;"></div>
<svg class="a" style="left:271px;top:497px;" width="763" height="3" viewBox="0 0 763 3"><path d="M0 1.5 H762" stroke="#8a9494" stroke-width="1"/><path d="M2 1.5 H762" stroke="#f01010" stroke-width="1.3" stroke-dasharray="18 5 4 5"/></svg>
<svg class="a" style="left:806px;top:206px;" width="3" height="525" viewBox="0 0 3 525"><path d="M1.5 0 V525" stroke="#8a9494" stroke-width="1"/><path d="M1.5 0 V525" stroke="#10e010" stroke-width="1.3" stroke-dasharray="18 5 4 5" stroke-dashoffset="23"/></svg>
<svg class="a" style="left:750px;top:480px;" width="70" height="70" viewBox="0 0 70 70"><path d="M37 18.5 H58" stroke="#f01010" stroke-width="3.2"/><path d="M26 18.5 L37 13.5 V23.5Z" fill="#f01010"/><path d="M29 15 L37 14 V23 L29 22Z" fill="#f01010"/><path d="M21 18.5 H26" stroke="#8a9494" stroke-width="1"/><path d="M0 18.5 H21" stroke="#f01010" stroke-width="1.2"/><g stroke="#f01010" stroke-width="1.4" fill="none"><path d="M13 12.5 L19 24.5 M19 12.5 L13 24.5 M11.5 12.5 H15.5 M17 12.5 H21 M11.5 24.5 H15.5 M17 24.5 H21"/></g><rect x="56" y="17" width="3" height="3" fill="none" stroke="#30d030" stroke-width="0.8"/><path d="M56.5 20 V38" stroke="#10e010" stroke-width="3"/><path d="M52 38 H61.5 L56.5 49.5Z" fill="#10e010"/><g stroke="#10e010" stroke-width="1.4" fill="none"><path d="M52 52.5 L56.5 59 L61 52.5 M56.5 59 V65 M53.5 65 H59.5 M51 52.5 H54 M59 52.5 H62"/></g></svg>
<svg class="a" style="left:274px;top:687px;" width="50" height="42" viewBox="0 0 50 42"><path d="M3 4 L9 11 M9 4 L3 11" stroke="#e02020" stroke-width="1"/><path d="M18 8 H34" stroke="#f0a060" stroke-width="2"/><path d="M13 8 L21 4 L19 8 L21 12Z" fill="#a04018"/><circle cx="34" cy="8" r="2.8" fill="#5a90e0"/><text x="38" y="12" font-size="9" fill="#2060e0" font-family="Liberation Sans">Z</text><path d="M34 11 V22" stroke="#a8c0a0" stroke-width="1.5"/><path d="M31 20 L34 28 L37 20Z" fill="#6a9a7a"/><text x="31" y="38" font-size="9" fill="#20e020" font-family="Liberation Sans">Y</text></svg>
<div class="a" style="left:1034px;top:206px;width:4px;height:525px;background:#d8d8d8;"></div>
<div class="a" style="left:1036px;top:206px;width:2px;height:525px;background:#d0d0d0;"></div>
<div class="a" style="left:1033px;top:181px;width:181px;height:550px;background:#e4e4e4;"></div>
<div class="a" style="left:1034px;top:182px;width:4px;height:549px;background:#d8d8d8;"></div>
<div class="a" style="left:1036px;top:206px;width:2px;height:525px;background:#d0d0d0;"></div>
<div class="a" style="left:1038px;top:181px;width:176px;height:25px;background:#e2e2e2;"></div>
<div class="t k" style="left:1044px;top:186.2px;font-size:15px;color:#333;font-weight:bold;">图素</div>
<div class="a" style="left:1200px;top:192px;width:0;height:0;border-left:4px solid transparent;border-right:4px solid transparent;border-top:4px solid #666"></div>
<div class="a" style="left:1040px;top:210px;width:51px;height:18px;border:1px solid #a8a8a8;background:#e8e8e8"></div>
<svg class="a" style="left:1045px;top:212px;" width="14" height="14" viewBox="0 0 14 14"><rect x="1" y="0.5" width="11" height="13" fill="#f4f4f4" stroke="#555" stroke-width="0.8"/><rect x="3" y="3" width="3" height="3" fill="#999"/><rect x="7" y="3" width="3" height="3" fill="#999"/><rect x="3" y="8" width="3" height="3" fill="#999"/><rect x="7" y="8" width="3" height="3" fill="#999"/><path d="M11 0.5 V13.5" stroke="#333" stroke-width="1.5"/></svg>
<div class="t" style="left:1063px;top:212.2px;font-size:13px;color:#111;font-weight:normal;">新建</div>
<div class="a" style="left:1093px;top:210px;width:51px;height:18px;border:1px solid #a8a8a8;background:#e8e8e8"></div>
<svg class="a" style="left:1098px;top:212px;" width="14" height="14" viewBox="0 0 14 14"><path d="M1 1 L7 3 V13.5 L1 11.5Z" fill="#e8e8e8" stroke="#777" stroke-width="0.8"/><path d="M7 1 H12 V13 H7" fill="none" stroke="#888" stroke-width="0.8"/><path d="M10 8 C12 9 12 12 10 13" stroke="#777" stroke-width="0.7" fill="none"/></svg>
<div class="t" style="left:1116px;top:212.2px;font-size:13px;color:#111;font-weight:normal;">打开</div>
<div class="a" style="left:1146px;top:210px;width:51px;height:18px;border:1px solid #a8a8a8;background:#e8e8e8"></div>
<svg class="a" style="left:1151px;top:212px;" width="14" height="14" viewBox="0 0 14 14"><rect x="4" y="0.5" width="9" height="8" fill="#f0f0f0" stroke="#777" stroke-width="0.7"/><rect x="0.5" y="4" width="10" height="9.5" fill="#5a5a40" stroke="#333" stroke-width="0.7"/><rect x="3" y="5" width="5" height="3" fill="#e0e0e0"/></svg>
<div class="t" style="left:1169px;top:212.2px;font-size:13px;color:#111;font-weight:normal;">保存</div>
<div class="a" style="left:1199px;top:210px;width:20px;height:18px;border:1px solid #a8a8a8;background:#e8e8e8"></div>
<div class="a" style="left:1205px;top:213px;width:9px;height:12px;background:#d8d8d8;"></div>
<div class="a" style="left:1040px;top:230px;width:18px;height:17px;border:1px solid #b8b8b8;background:#e6e6e6"></div>
<svg class="a" style="left:1043px;top:233px;" width="12" height="11" viewBox="0 0 12 11"><path d="M0.5 5.5 L5 1 V3.5 H11.5 V7.5 H5 V10Z" fill="#b8b8b8" stroke="#9a9a9a" stroke-width="0.6"/></svg>
<div class="t k" style="left:1061px;top:230.2px;font-size:15px;color:#444;font-weight:bold;">搜索...</div>
<div class="a" style="left:1039px;top:249px;width:175px;height:457px;background:#7a7a92;"></div>
<div class="a" style="left:1040px;top:250px;width:174px;height:456px;background:#c2e0c1;"></div>
<div class="a" style="left:1062px;top:253px;width:32px;height:32px;background:#efefef;"></div>
<svg class="a" style="left:1062px;top:253px;" width="32" height="32" viewBox="0 0 32 32"><path d="M2 6 L14 1.5 L30 5 L19 10Z" fill="#dce8e4"/><path d="M2 6 L19 10 L19 30 L3 25Z" fill="#c4d6d2"/><path d="M19 10 L30 5 L29 24 L19 30Z" fill="#aabcb8"/></svg>
<div class="a" style="left:1137px;top:253px;width:32px;height:32px;background:#efefef;"></div>
<svg class="a" style="left:1137px;top:253px;" width="32" height="32" viewBox="0 0 32 32"><path d="M1 15 L14 3 L31 10 L20 25Z" fill="#2c3188"/><path d="M5.5 14.5 L14.5 6.5 L26.5 11 L19 20.5Z" fill="#e6ecf0"/><path d="M14.5 6.5 L19 20.5 L11 17" fill="#c4ccd8"/><path d="M20 27 L27 21" stroke="#c8c8c8" stroke-width="1.2"/></svg>
<div class="t k" style="left:1055.5px;top:287.7px;font-size:15px;color:#111;font-weight:bold;">长方体</div>
<div class="t k" style="left:1123.0px;top:287.7px;font-size:15px;color:#111;font-weight:bold;">孔类长方</div>
<div class="t k" style="left:1145.5px;top:304.7px;font-size:15px;color:#111;font-weight:bold;">体</div>
<div class="a" style="left:1062px;top:328px;width:32px;height:32px;background:#efefef;"></div>
<svg class="a" style="left:1062px;top:328px;" width="32" height="32" viewBox="0 0 32 32"><path d="M1.5 3 L13 5 L30 25 L16 27Z" fill="#cadcd8"/><path d="M16 27 L30 25 L30 27.5 L16 29.5Z" fill="#98aaa6"/><path d="M1.5 3 L16 27 L16 29.5 L1 6Z" fill="#b4c8c4"/></svg>
<div class="a" style="left:1137px;top:328px;width:32px;height:32px;background:#efefef;"></div>
<svg class="a" style="left:1137px;top:328px;" width="32" height="32" viewBox="0 0 32 32"><path d="M1 20 L13 2 L31 10 L21 30Z" fill="#2c3188"/><path d="M5.5 19.5 L14 6.5 L26.5 11.5 L19.5 25.5Z" fill="#e8eef2"/><path d="M8 19 L14.5 9 L24 12.5 L18 23Z" fill="#d0d8e0"/></svg>
<div class="t k" style="left:1063.0px;top:362.7px;font-size:15px;color:#111;font-weight:bold;">厚板</div>
<div class="t k" style="left:1123.0px;top:362.7px;font-size:15px;color:#111;font-weight:bold;">孔类厚板</div>
<div class="a" style="left:1062px;top:403px;width:32px;height:32px;background:#efefef;"></div>
<svg class="a" style="left:1062px;top:403px;" width="32" height="32" viewBox="0 0 32 32"><path d="M4 7 C6 3 14 3 22 5 C30 7 30 12 27 14 L26 28 C24 31 18 31 14 29 L6 27Z" fill="#c4d4d0"/><path d="M4 7 C6 11 22 14 27 14 C30 12 30 7 22 5 C14 3 6 3 4 7Z" fill="#e0ece8"/><path d="M20 13 L19 30" stroke="#a4b4b0" stroke-width="2.5"/></svg>
<div class="a" style="left:1137px;top:403px;width:32px;height:32px;background:#efefef;"></div>
<svg class="a" style="left:1137px;top:403px;" width="32" height="32" viewBox="0 0 32 32"><path d="M1 17 L9 4 L31 11 L24 28Z" fill="#2c3188"/><rect x="10" y="10" width="16" height="7.5" rx="3.7" transform="rotate(50 18 13.7)" fill="#e8eef4"/><path d="M13 11 C15 9 18 10 20 13" stroke="#b0bcc8" stroke-width="1.5" fill="none"/><path d="M14 28 L22 28" stroke="#c0c0c0"/></svg>
<div class="t k" style="left:1070.5px;top:437.7px;font-size:15px;color:#111;font-weight:bold;">键</div>
<div class="t k" style="left:1130.5px;top:437.7px;font-size:15px;color:#111;font-weight:bold;">孔类键</div>
<div class="a" style="left:1062px;top:478px;width:32px;height:32px;background:#efefef;"></div>
<svg class="a" style="left:1062px;top:478px;" width="32" height="32" viewBox="0 0 32 32"><path d="M4 8 V25 C4 31 28 31 28 25 V8Z" fill="#c8d8d4"/><ellipse cx="16" cy="8" rx="12" ry="5.5" fill="#e6eeec" stroke="#b8c8c4" stroke-width="0.6"/><path d="M20 13 V30" stroke="#b0c0bc" stroke-width="3"/></svg>
<div class="a" style="left:1137px;top:478px;width:32px;height:32px;background:#efefef;"></div>
<svg class="a" style="left:1137px;top:478px;" width="32" height="32" viewBox="0 0 32 32"><path d="M1 14 L17 2 L31 14 L16 26Z" fill="#2c3188"/><ellipse cx="17" cy="15" rx="8" ry="6" transform="rotate(-20 17 15)" fill="#f0f2f4"/><path d="M10 17 C10 10 22 8 24 12 C20 10 12 12 10 17Z" fill="#b8c0cc"/><path d="M14 26 C17 30 24 28 24 22" stroke="#d0d0d0" stroke-width="1.3" fill="none"/></svg>
<div class="t k" style="left:1055.5px;top:512.7px;font-size:15px;color:#111;font-weight:bold;">圆柱体</div>
<div class="t k" style="left:1123.0px;top:512.7px;font-size:15px;color:#111;font-weight:bold;">孔类圆柱</div>
<div class="t k" style="left:1145.5px;top:529.7px;font-size:15px;color:#111;font-weight:bold;">体</div>
<div class="a" style="left:1062px;top:553px;width:32px;height:32px;background:#efefef;"></div>
<svg class="a" style="left:1062px;top:553px;" width="32" height="32" viewBox="0 0 32 32"><path d="M2 9 L3 24 C4 31 28 30 28 23 L29 8Z" fill="#c0d0cc"/><ellipse cx="16" cy="8" rx="13" ry="5.5" transform="rotate(-8 16 8)" fill="#e4ecea" stroke="#b8c8c4" stroke-width="0.6"/><path d="M18 13 V30" stroke="#a8b8b4" stroke-width="3"/></svg>
<div class="a" style="left:1137px;top:553px;width:32px;height:32px;background:#efefef;"></div>
<svg class="a" style="left:1137px;top:553px;" width="32" height="32" viewBox="0 0 32 32"><path d="M1 14 L17 2 L31 14 L16 26Z" fill="#2c3188"/><ellipse cx="16" cy="15" rx="8.5" ry="5.5" transform="rotate(-25 16 15)" fill="#eef0f2"/><path d="M9 18 C9 10 22 8 24 11 C20 10 12 12 9 18Z" fill="#b8c0cc"/><path d="M11 26 C14 31 24 30 24 24" stroke="#d8d8d8" stroke-width="2" fill="none"/></svg>
<div class="t k" style="left:1055.5px;top:587.7px;font-size:15px;color:#111;font-weight:bold;">椭圆柱</div>
<div class="t k" style="left:1123.0px;top:587.7px;font-size:15px;color:#111;font-weight:bold;">孔类椭圆</div>
<div class="t k" style="left:1145.5px;top:604.7px;font-size:15px;color:#111;font-weight:bold;">柱</div>
<div class="a" style="left:1062px;top:628px;width:32px;height:32px;background:#efefef;"></div>
<svg class="a" style="left:1062px;top:628px;" width="32" height="32" viewBox="0 0 32 32"><path d="M2 14 L9 4 L22 2 L30 12 L23 30 L11 27Z" fill="#c8e0e4"/><path d="M9 4 L22 2 L30 12 L14 14Z" fill="#a8b8b8"/><path d="M14 14 L30 12 L23 30 L16 28Z" fill="#808c8c"/></svg>
<div class="a" style="left:1137px;top:628px;width:32px;height:32px;background:#efefef;"></div>
<svg class="a" style="left:1137px;top:628px;" width="32" height="32" viewBox="0 0 32 32"><path d="M0.5 22 L13 2 L31 3 L19 26Z" fill="#2c3188"/><path d="M10 17 L13 8 L20 6 L24 9 L22 17 L16 22Z" fill="#d8dde4"/><path d="M13 8 L20 6 L24 9 L17 12Z" fill="#eef0f4"/><path d="M22 11 C30 12 31 24 20 29" stroke="#dcdcdc" stroke-width="2.5" fill="none"/></svg>
<div class="t k" style="left:1055.5px;top:662.7px;font-size:15px;color:#111;font-weight:bold;">多棱体</div>
<div class="t k" style="left:1123.0px;top:662.7px;font-size:15px;color:#111;font-weight:bold;">孔类多棱</div>
<div class="t k" style="left:1145.5px;top:679.7px;font-size:15px;color:#111;font-weight:bold;">体</div>
<div class="a" style="left:1062px;top:703px;width:32px;height:3px;background:#eeeeee;"></div>
<div class="a" style="left:1137px;top:703px;width:32px;height:3px;background:#eeeeee;"></div>
<div class="a" style="left:1038px;top:706px;width:176px;height:25px;background:#dcdcdc;"></div>
<div class="a" style="left:1038px;top:706px;width:176px;height:1px;background:#a0a0a0;"></div>
<div class="a" style="left:1039px;top:705px;width:42px;height:24px;border:1px solid #a0a0a0;border-top:none;background:#f0f0f0"></div>
<div class="t k" style="left:1046px;top:709.2px;font-size:15px;color:#333;font-weight:bold;">图素</div>
<div class="t k" style="left:1088.5px;top:709.2px;font-size:15px;color:#333;font-weight:bold;">高级图素</div>
<div class="t k" style="left:1161.5px;top:709.2px;font-size:15px;color:#333;font-weight:bold;">钣金</div>
<div class="a" style="left:42px;top:731px;width:1172px;height:12px;background:#efefef;"></div>
<div class="a" style="left:42px;top:731px;width:1172px;height:1px;background:#c4c4c4;"></div>
<div class="a" style="left:43px;top:732px;width:1171px;height:11px;overflow:hidden">
<div class="t" style="left:4.5px;top:2px;font-size:15px;color:#333;font-weight:bold;letter-spacing:-0.6px">帮助按F1键</div>
<div class="t" style="left:206.5px;top:2px;font-size:15px;color:#333;font-weight:normal;letter-spacing:0.75px">X: 33.693 Y: -17.468 Z: 0.000</div>
<svg class="a" style="left:438px;top:3px" width="13" height="12" viewBox="0 0 13 12"><path d="M6 0.5 H12 V12" fill="none" stroke="#d89030" stroke-width="1.2"/><path d="M8 3 H12 M9 6 H12" stroke="#d89030" stroke-width="1"/><rect x="0" y="4" width="4" height="3" fill="#e8b060"/></svg>
<div class="t" style="left:457px;top:2.5px;font-size:15px;color:#111;font-weight:bold;">单位:</div>
<div class="t" style="left:503px;top:3.5px;font-size:15px;color:#333;font-weight:normal;">mm  deg</div>
<svg class="a" style="left:569px;top:3px" width="12" height="12" viewBox="0 0 12 12"><path d="M1 11 V5 C1 1 11 1 11 5 V11" fill="#f0f0f0" stroke="#777" stroke-width="1"/><path d="M6 1 V6" stroke="#777" stroke-width="0.8"/></svg>
<svg class="a" style="left:592px;top:3px" width="12" height="12" viewBox="0 0 12 12"><path d="M1 11 V5 C1 1 11 1 11 5 V11" fill="#f0f0f0" stroke="#777" stroke-width="1"/><path d="M6 1 V6" stroke="#777" stroke-width="0.8"/></svg>
<svg class="a" style="left:626px;top:4px" width="15" height="10" viewBox="0 0 15 10"><path d="M1 4 L4 1 H14 L11 4Z" fill="#f8f0a0" stroke="#806020" stroke-width="0.6"/><rect x="1" y="4" width="10" height="7" fill="#f0d040" stroke="#806020" stroke-width="0.6"/></svg>
<svg class="a" style="left:661px;top:3px" width="16" height="10" viewBox="0 0 16 10"><path d="M1 4 L4 1 H15 L12 4Z" fill="#a0c8f0" stroke="#205090" stroke-width="0.6"/><rect x="1" y="4" width="11" height="7" fill="#4080d0" stroke="#205090" stroke-width="0.6"/><path d="M12 4 L15 1 V8 L12 11" fill="#3060b0"/></svg>
<svg class="a" style="left:701px;top:4px" width="7" height="8" viewBox="0 0 7 8"><circle cx="3.5" cy="5" r="3" fill="#2a80d0"/><path d="M3.5 0 V2" stroke="#2a80d0"/></svg>
<svg class="a" style="left:732px;top:3px" width="14" height="10" viewBox="0 0 14 10"><path d="M1 10 L8 3 L13 1 V10Z" fill="#c8d0d8" stroke="#607080" stroke-width="0.7"/></svg>
<svg class="a" style="left:756px;top:3px" width="14" height="10" viewBox="0 0 14 10"><path d="M1 10 C3 2 5 2 6 8 M8 10 C10 4 12 4 13 6" fill="none" stroke="#888" stroke-width="0.8"/></svg>
<svg class="a" style="left:787px;top:3px" width="16" height="10" viewBox="0 0 16 10"><path d="M1 4 L4 1 H15 L12 4Z" fill="#a0c8f0" stroke="#205090" stroke-width="0.6"/><rect x="1" y="4" width="11" height="7" fill="#3a78c8" stroke="#205090" stroke-width="0.6"/><path d="M12 4 L15 1 V8 L12 11" fill="#2a60b0"/></svg>
<svg class="a" style="left:823px;top:3px" width="12" height="10" viewBox="0 0 12 10"><rect x="2" y="0" width="8" height="5" fill="#a0b0c8" stroke="#4a5a78" stroke-width="0.6"/><rect x="0" y="4" width="12" height="6" fill="#6080a8" stroke="#3a4a68" stroke-width="0.6"/></svg>
<svg class="a" style="left:854px;top:3px" width="12" height="10" viewBox="0 0 12 10"><path d="M1 8 L7 3 V5 H11 V9 H7 V11Z" fill="#c0c0c0" transform="rotate(-30 6 6)"/></svg>
<div class="a" style="left:615.5px;top:9px;width:4px;height:2px;background:#333;"></div>
<div class="a" style="left:649.5px;top:9px;width:4px;height:2px;background:#333;"></div>
<div class="a" style="left:685.5px;top:9px;width:4px;height:2px;background:#333;"></div>
<div class="a" style="left:720.5px;top:9px;width:4px;height:2px;background:#333;"></div>
<div class="a" style="left:774px;top:9px;width:4px;height:2px;background:#333;"></div>
<div class="a" style="left:807px;top:9px;width:4px;height:2px;background:#333;"></div>
<div class="a" style="left:839.3px;top:9px;width:4px;height:2px;background:#333;"></div>
<div class="a" style="left:873px;top:2px;width:24px;height:9px;background:#c0c0c0;"></div>
<svg class="a" style="left:877px;top:3px" width="12" height="10" viewBox="0 0 12 10"><path d="M1 0 L11 8 L5 8 L1 12Z" fill="#f4f4f4" stroke="#333" stroke-width="0.8"/></svg>
<svg class="a" style="left:903px;top:6px" width="10" height="6" viewBox="0 0 10 6"><path d="M2 2 L6 5" stroke="#555" stroke-width="0.8"/></svg>
<div class="a" style="left:921px;top:2px;width:90px;height:9px;background:#d6d6d6;border:1px solid #a8a8a8;border-bottom:none"></div>
<div class="t" style="left:924.5px;top:4px;font-size:15px;color:#a8a8a8;font-weight:bold;">轮廓</div>
<div class="a" style="left:1010px;top:2px;width:91px;height:9px;background:#f0f0f0;border:1px solid #a8a8a8;border-bottom:none"></div>
<div class="t" style="left:1013px;top:3px;font-size:15px;color:#111;font-weight:bold;">任意</div>
<div class="a" style="left:1100px;top:2px;width:67px;height:9px;background:#f0f0f0;border:1px solid #a8a8a8;border-bottom:none"></div>
<div class="t" style="left:1103.5px;top:4px;font-size:15px;color:#222;font-weight:normal;">Default</div>
</div>
</body></html>
